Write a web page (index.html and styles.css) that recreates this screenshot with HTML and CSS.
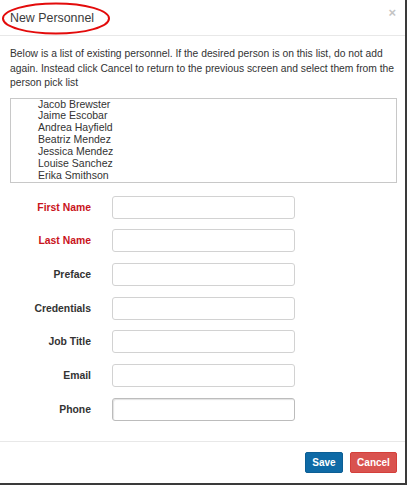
FILE: index.html
```html
<!DOCTYPE html>
<html>
<head>
<meta charset="utf-8">
<link rel="stylesheet" href="styles.css">
</head>
<body>
<div class="modal">
  <div class="modal-header">
    <span class="modal-title">New Personnel</span>
    <span class="close">&times;</span>
    <svg class="circle-mark" width="112" height="34" viewBox="0 0 112 34">
      <ellipse cx="56" cy="17.5" rx="53" ry="15" fill="none" stroke="#e30b0b" stroke-width="2"/>
    </svg>
  </div>
  <div class="modal-body">
    <p class="intro">Below is a list of existing personnel. If the desired person is on this list, do not add again. Instead click Cancel to return to the previous screen and select them from the person pick list</p>
    <div class="listbox">
      <div class="item">Jacob Brewster</div>
      <div class="item">Jaime Escobar</div>
      <div class="item">Andrea Hayfield</div>
      <div class="item">Beatriz Mendez</div>
      <div class="item">Jessica Mendez</div>
      <div class="item">Louise Sanchez</div>
      <div class="item">Erika Smithson</div>
    </div>
    <div class="form">
      <label class="lbl required">First Name</label><div class="input"></div>
      <label class="lbl required">Last Name</label><div class="input"></div>
      <label class="lbl">Preface</label><div class="input"></div>
      <label class="lbl">Credentials</label><div class="input"></div>
      <label class="lbl">Job Title</label><div class="input"></div>
      <label class="lbl">Email</label><div class="input"></div>
      <label class="lbl">Phone</label><div class="input focus"></div>
    </div>
  </div>
  <div class="modal-footer">
    <button class="btn btn-save">Save</button>
    <button class="btn btn-cancel">Cancel</button>
  </div>
</div>
</body>
</html>
```

FILE: styles.css
```css
html, body {
  margin: 0;
  padding: 0;
  background: #ffffff;
}
body {
  font-family: "Liberation Sans", Arial, sans-serif;
  color: #333333;
}
.modal {
  width: 405px;
  height: 483px;
  background: #ffffff;
  border-right: 2px solid #3a3a3a;
  border-bottom: 2px solid #3a3a3a;
  display: flex;
  flex-direction: column;
}
.modal-header {
  position: relative;
  height: 35px;
  border-bottom: 1px solid #e8e8e8;
  display: flex;
  align-items: center;
  padding: 0 10px;
  box-sizing: content-box;
}
.modal-title {
  font-size: 12.4px;
  color: #3b3b3b;
  margin-top: 1px;
}
.close {
  position: absolute;
  right: 9px;
  top: 5px;
  font-size: 13px;
  font-weight: bold;
  color: #c4c4c4;
}
.circle-mark {
  position: absolute;
  left: 0;
  top: 1px;
}
.modal-body {
  padding: 11px 0 0 10px;
  flex: 1;
}
.intro {
  margin: 0;
  font-size: 10.3px;
  line-height: 14.5px;
  color: #333;
  width: 392px;
}
.listbox {
  margin-top: 7px;
  width: 387px;
  border: 1px solid #c8c8c8;
  padding: 0 0 0 27px;
  box-sizing: border-box;
  height: 85px;
}
.item {
  font-size: 10.5px;
  line-height: 11.9px;
  color: #333;
}
.form {
  margin-top: 13px;
  display: grid;
  grid-template-columns: 81px 183px;
  column-gap: 21px;
  row-gap: 10.7px;
  grid-auto-rows: 23px;
}
.lbl {
  font-size: 10.4px;
  font-weight: bold;
  color: #333;
  text-align: right;
  align-self: center;
}
.lbl.required {
  color: #c9141c;
}
.input {
  border: 1px solid #d2d2d2;
  border-radius: 3px;
  box-sizing: border-box;
  background: #fff;
}
.input.focus {
  border: 1px solid #bcbcbc;
  box-shadow: inset 1px 1px 1px rgba(0,0,0,0.12);
}
.modal-footer {
  border-top: 1px solid #e8e8e8;
  height: 42px;
  display: flex;
  justify-content: flex-end;
  align-items: flex-start;
  padding: 10px 8px 0 0;
  gap: 7px;
  box-sizing: border-box;
}
.btn {
  height: 21px;
  border: 1px solid transparent;
  border-radius: 2px;
  color: #fff;
  font-family: "Liberation Sans", Arial, sans-serif;
  font-weight: bold;
  font-size: 10px;
  padding: 0;
}
.btn-save {
  width: 38px;
  background: #0e6aa6;
  border-color: #0c5e94;
}
.btn-cancel {
  width: 47px;
  background: #d9534f;
  border-color: #d43f3a;
}
```
